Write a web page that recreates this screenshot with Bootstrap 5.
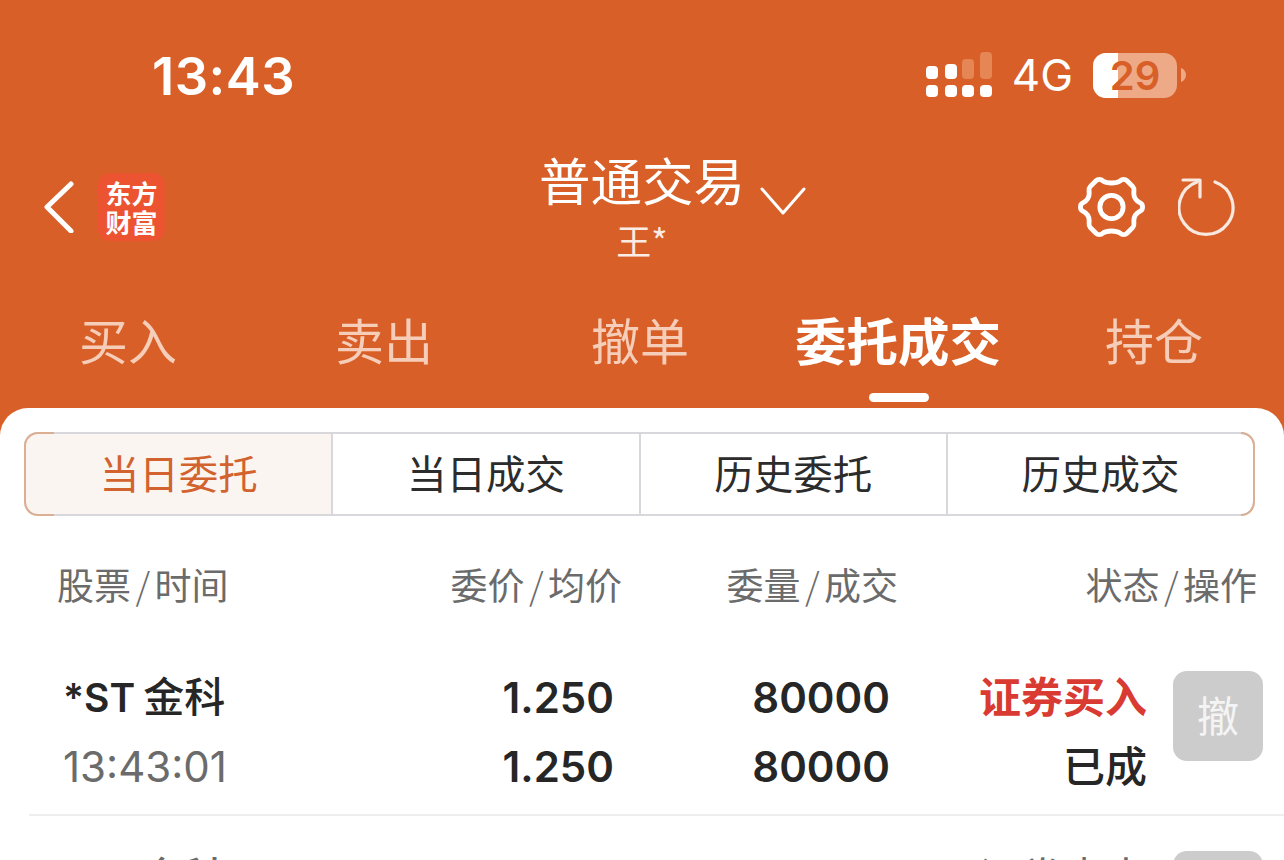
<!DOCTYPE html>
<html lang="zh-CN">
<head>
  <meta charset="UTF-8" />
  <meta name="viewport" content="width=device-width, initial-scale=1" />
  <title>普通交易</title>
  <link href="https://cdn.jsdelivr.net/npm/bootstrap@5.3.3/dist/css/bootstrap.min.css" rel="stylesheet" />
  <style>
    html, body {
      height: 860px;
      overflow: hidden;
      margin: 0;
      background: #d85f27;
      font-family: Inter, "Noto Sans CJK SC", sans-serif;
    }
    .app-top { background: #d85f27; color: #fff; height: 408px; }

    /* status bar */
    .status-bar { height: 150px; padding: 0 98px 0 152px; }
    .status-time { font-size: 52.5px; font-weight: 600; line-height: 1; letter-spacing: .5px; padding-top: 3px; }
    .status-net { font-size: 44px; line-height: 1; margin: 0 20px; }
    .battery-wrap { position: relative; width: 84px; height: 45px; border-radius: 13px; overflow: hidden; background: #eeaa86; }
    .battery-fill { width: 25px; height: 45px; background: #fff; }
    .battery-num { position: absolute; inset: 0; text-align: center; color: #d85f27; font-size: 40px; font-weight: 600; line-height: 45px; }

    /* title row */
    .title-row { height: 122px; padding: 0 46px 8px 44px; }
    .logo-box {
      width: 67px; height: 68px; margin-left: 24px; border-radius: 12px;
      background: #ec5330; color: #fff;
      font-family: "Noto Sans CJK SC", sans-serif; font-weight: 700;
      font-size: 26px; line-height: 29px; text-align: center; padding-top: 5px;
    }
    .title-mid { left: 0; right: 0; top: -2px; text-align: center; }
    .title-main { font-family: "Noto Sans CJK SC", sans-serif; font-size: 51.5px; line-height: 62px; }
    .title-sub { font-family: "Noto Sans CJK SC", sans-serif; font-size: 35px; line-height: 44px; opacity: .88; margin-top: 8px; }
    .title-caret { position: absolute; left: 760px; top: 36px; }
    .title-tools { gap: 33px; }

    /* tabs */
    .tab-row { height: 99px; margin-top: 37px; }
    .tab-item {
      font-family: "Noto Sans CJK SC", sans-serif; font-size: 49px; line-height: 60px;
      color: #f5cdb8; position: absolute; top: 0; white-space: nowrap; transform: translateX(-50%);
    }
    .tab-item.on { color: #fff; font-weight: 700; font-size: 51.5px; }
    .tab-item.on::after {
      content: ""; position: absolute; left: 50%; top: 84px; width: 60px; height: 9px;
      margin-left: -29px; border-radius: 5px; background: #fff;
    }

    /* white sheet */
    .app-sheet {
      background: #fff; height: 452px; padding-top: 24px; border-radius: 28px 28px 0 0; overflow: hidden;
      font-family: Inter, "Noto Sans CJK SC", sans-serif;
    }
    .seg-bar { display: flex; height: 84px; margin: 0 29px 0 24px; border: 2px solid #d7d7dc; border-radius: 14px; position: relative; }
    .seg-bar::before, .seg-bar::after {
      content: ""; position: absolute; top: -2px; bottom: -2px; border: 2px solid #dcae92; pointer-events: none;
    }
    .seg-bar::before { left: -2px; width: 30px; border-right: 0; border-radius: 14px 0 0 14px; }
    .seg-bar::after { right: -2px; width: 14px; border-left: 0; border-radius: 0 14px 14px 0; }
    .seg-item {
      flex: 1; display: flex; align-items: center; justify-content: center; padding-bottom: 4px;
      font-family: "Noto Sans CJK SC", sans-serif; font-size: 39.5px; color: #2c2c2c;
      border-left: 2px solid #d7d7dc;
    }
    .seg-item:first-child { border-left: 0; border-radius: 12px 0 0 12px; }
    .seg-item.on { background: #fbf5f1; color: #d2622e; }

    .head-row { height: 147px; padding-top: 38px; color: #6b6b6b; font-size: 37px; line-height: 60px; font-family: "Noto Sans CJK SC", sans-serif; }
    .head-slash { margin: 0 4.5px; font-weight: 300; }
    .cell-a { width: 400px; padding-left: 57px; }
    .cell-b { width: 222px; text-align: right; }
    .cell-c { width: 276px; text-align: right; }
    .cell-d { width: 359px; text-align: right; }
    .trade-row { height: 153px; margin-left: 29px; border-bottom: 2px solid #eeeeee; position: relative; }
    .trade-row-next { height: 180px; padding-top: 27px; border-bottom: 0; }
    .trade-line { height: 69px; line-height: 69px; font-size: 42px; font-weight: 600; color: #262626; }
    .t-a { width: 378px; padding-left: 34px; }
    .t-name { font-size: 39px; }
    .t-gap { margin-left: 8px; font-size: 41px; font-weight: 500; }
    .t-b { width: 207px; text-align: right; }
    .t-c { width: 276px; text-align: right; }
    .t-d { width: 257px; text-align: right; font-weight: 500; }
    .txt-muted { color: #6b6b6b; font-weight: 400; }
    .txt-red { color: #d93a32; font-weight: 700; }
    .cancel-btn {
      position: absolute; left: 1144px; width: 90px; height: 90px; top: 8px; padding-bottom: 5px;
      background: #cccccc; color: #f4f4f4; border-radius: 14px;
      font-family: "Noto Sans CJK SC", sans-serif; font-size: 42px;
      display: flex; align-items: center; justify-content: center;
    }
    .trade-row-next .cancel-btn { top: 35px; }
  </style>
</head>
<body>

  <div class="app-top">
    <!-- status bar -->
    <div class="status-bar d-flex align-items-center justify-content-between">
      <div class="status-time">13:43</div>
      <div class="d-flex align-items-center">
        <svg width="66" height="46" viewBox="0 0 66 46">
          <g fill="#fff">
            <rect x="0" y="14" width="12" height="13" rx="4"/><rect x="19" y="12" width="12" height="15" rx="4"/>
            <rect x="0" y="33" width="12" height="12" rx="4"/><rect x="19" y="33" width="12" height="12" rx="4"/>
            <rect x="36" y="33" width="12" height="12" rx="4"/><rect x="54" y="33" width="12" height="12" rx="4"/>
          </g>
          <g fill="#e58654">
            <rect x="36" y="7" width="12" height="20" rx="4"/><rect x="54" y="0" width="12" height="27" rx="4"/>
          </g>
        </svg>
        <div class="status-net">4G</div>
        <div class="battery-wrap">
          <div class="battery-fill"></div>
          <div class="battery-num">29</div>
        </div>
        <svg class="ms-1" width="5" height="14" viewBox="0 0 5 14"><path d="M0 0c3 1 5 4 5 7s-2 6-5 7z" fill="#eeaa86"/></svg>
      </div>
    </div>

    <!-- title row -->
    <div class="title-row d-flex align-items-center position-relative">
      <svg width="30" height="52" viewBox="0 0 30 52" fill="none" stroke="#fff" stroke-width="5" stroke-linecap="round" stroke-linejoin="round">
        <path d="M27 3 3 26l24 24"/>
      </svg>
      <div class="logo-box">东方<br>财富</div>
      <div class="title-mid position-absolute">
        <div class="title-main">普通交易</div>
        <div class="title-sub">王*</div>
      </div>
      <svg class="title-caret" width="46" height="30" viewBox="0 0 46 30" fill="none" stroke="#fff" stroke-width="3" stroke-linecap="round" stroke-linejoin="round">
        <path d="M2 3l21 24L44 3"/>
      </svg>
      <div class="title-tools ms-auto d-flex align-items-center">
        <svg width="67" height="64" viewBox="0 0 68 66" fill="none" stroke="#fff" stroke-width="5" stroke-linejoin="round">
          <path d="M25 6c4 3 14 3 18 0 2-2 5-2 7 0l6 6c2 2 1 4 1 7 0 4 3 8 7 10 2 1 2 3 2 4s0 3-2 4c-4 2-7 6-7 10 0 3 1 5-1 7l-6 6c-2 2-5 2-7 0-4-3-14-3-18 0-2 2-5 2-7 0l-6-6c-2-2-1-4-1-7 0-4-3-8-7-10-2-1-2-3-2-4s0-3 2-4c4-2 7-6 7-10 0-3-1-5 1-7l6-6c2-2 5-2 7 0z"/>
          <circle cx="34" cy="33" r="12"/>
        </svg>
        <svg width="60" height="60" viewBox="0 0 60 60" fill="none" stroke="#f8e8df" stroke-width="3.2" stroke-linecap="round" stroke-linejoin="round">
          <path d="M37 5A27 27 0 1 1 19 5"/>
          <path d="M5 3h17v17"/>
        </svg>
      </div>
    </div>

    <!-- tabs -->
    <div class="tab-row position-relative">
      <div class="tab-item" style="left:128px">买入</div>
      <div class="tab-item" style="left:384px">卖出</div>
      <div class="tab-item" style="left:640px">撤单</div>
      <div class="tab-item on" style="left:898px">委托成交</div>
      <div class="tab-item" style="left:1154px">持仓</div>
    </div>
  </div>

  <div class="app-sheet">
    <div class="seg-bar">
      <div class="seg-item on">当日委托</div>
      <div class="seg-item">当日成交</div>
      <div class="seg-item">历史委托</div>
      <div class="seg-item">历史成交</div>
    </div>

    <div class="head-row d-flex">
      <div class="cell-a">股票<span class="head-slash">/</span>时间</div>
      <div class="cell-b">委价<span class="head-slash">/</span>均价</div>
      <div class="cell-c">委量<span class="head-slash">/</span>成交</div>
      <div class="cell-d">状态<span class="head-slash">/</span>操作</div>
    </div>

    <div class="trade-row">
      <div class="trade-line d-flex">
        <div class="t-a t-name">*ST<span class="t-gap">金科</span></div>
        <div class="t-b">1.250</div>
        <div class="t-c">80000</div>
        <div class="t-d txt-red">证券买入</div>
      </div>
      <div class="trade-line d-flex">
        <div class="t-a txt-muted">13:43:01</div>
        <div class="t-b">1.250</div>
        <div class="t-c">80000</div>
        <div class="t-d">已成</div>
      </div>
      <div class="cancel-btn">撤</div>
    </div>

    <div class="trade-row trade-row-next">
      <div class="trade-line d-flex">
        <div class="t-a t-name txt-muted">*ST<span class="t-gap">金科</span></div>
        <div class="t-b"></div>
        <div class="t-c"></div>
        <div class="t-d txt-muted">证券卖出</div>
      </div>
      <div class="cancel-btn">撤</div>
    </div>
  </div>

  <script src="https://cdn.jsdelivr.net/npm/bootstrap@5.3.3/dist/js/bootstrap.bundle.min.js"></script>
</body>
</html>
